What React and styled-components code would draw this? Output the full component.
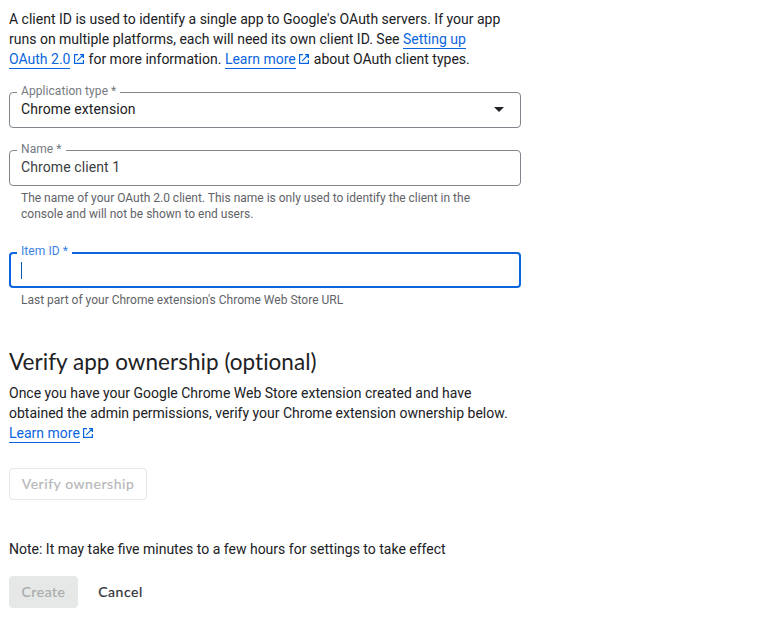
import React from "react";
import styled, { createGlobalStyle } from "styled-components";

const GlobalStyle = createGlobalStyle`
  * { box-sizing: border-box; }
  body {
    margin: 0;
    background: #fff;
    color: #202124;
    font: 400 14px/20px Roboto, sans-serif;
  }
`;

const Page = styled.main`
  display: flex;
  flex-direction: column;
  align-items: flex-start;
  width: 521px;
  padding: 9px 0 0 9px;
`;

const Paragraph = styled.p`
  margin: 0;
  white-space: nowrap;
`;

const Link = styled.a`
  color: #0b66de;
  text-decoration: none;
  padding-bottom: 1px;
  border-bottom: 1px solid #0b66de;
`;

const LaunchSvg = styled.svg`
  width: 12px;
  height: 12px;
  margin: 0 0 0 2.6px;
  vertical-align: -1px;
  fill: none;
  stroke: #0b66de;
  stroke-width: 1.2;
`;

const Field = styled.div`
  position: relative;
  display: flex;
  align-items: center;
  justify-content: space-between;
  width: 512px;
  height: 36px;
  margin-top: ${(p) => p.$gap}px;
  padding: 0 ${(p) => (p.$focused ? 10 : 11)}px ${(p) => (p.$focused ? 0 : 2)}px;
  border: ${(p) => (p.$focused ? "2px solid #0b66de" : "1px solid #80868b")};
  border-radius: 4px;
  color: ${(p) => p.$color || "#202124"};
  letter-spacing: 0.1px;
`;

const FieldLabel = styled.label`
  position: absolute;
  top: ${(p) => (p.$focused ? -11 : -10)}px;
  left: ${(p) => (p.$focused ? 6 : 7)}px;
  padding: 0 4px;
  background: #fff;
  color: ${(p) => (p.$focused ? "#3c82e4" : "#757a7f")};
  font-size: 12px;
  line-height: 17px;
  letter-spacing: 0.07px;
  white-space: nowrap;
`;

const Caret = styled.span`
  width: 1px;
  height: 17px;
  margin-top: 1px;
  background: #0b57b8;
`;

const ArrowSvg = styled.svg`
  width: 10px;
  height: 5px;
  margin-right: 5px;
  margin-top: 1px;
  fill: #202124;
`;

const Hint = styled.p`
  margin: 4px 0 0 12px;
  color: #5f6368;
  font-size: 12px;
  line-height: 16px;
  white-space: nowrap;
`;

const Heading = styled.h2`
  margin: 40px 0 7px;
  font: 400 22.5px/28px Lato, sans-serif;
  letter-spacing: ${(p) => p.$tracking}px;
  white-space: nowrap;
`;

const Note = styled(Paragraph)`
  margin-top: 39px;
`;

const Actions = styled.div`
  display: flex;
  gap: 8px;
  margin-top: ${(p) => p.$gap}px;
`;

const Button = styled.button`
  width: ${(p) => p.$width}px;
  height: 32px;
  padding: 0;
  border: 1px solid ${(p) => (p.$kind === "outlined" ? "#e6e7e7" : "transparent")};
  border-radius: 4px;
  background: ${(p) => (p.$kind === "filled" ? "#e6e8e7" : "#fff")};
  background-clip: border-box;
  color: ${(p) => (p.$kind === "text" ? "#303238" : p.$kind === "filled" ? "#a9abac" : "#b7b8b9")};
  font: 400 14px/20px Lato, sans-serif;
  -webkit-text-stroke: 0.2px currentColor;
  letter-spacing: 0.55px;
  white-space: nowrap;
`;

function LaunchIcon() {
  return (
    <LaunchSvg viewBox="0 0 12 12" aria-hidden="true">
      <path d="M5 1.6H1.6V10.4H10.4V7M7 1.6H10.4V5M10.2 1.8L4.2 7.8" />
    </LaunchSvg>
  );
}

export default function App() {
  return (
    <>
      <GlobalStyle />
      <Page>
        <Paragraph>
          A client ID is used to identify a single app to Google's OAuth servers. If your app<br />
          runs on multiple platforms, each will need its own client ID. See <Link>Setting up</Link><br />
          <Link>OAuth 2.0</Link><LaunchIcon /> for more information. <Link>Learn more</Link><LaunchIcon /> about OAuth client types.
        </Paragraph>
        <Field $gap={23}>
          <FieldLabel>Application type *</FieldLabel>
          <span>Chrome extension</span>
          <ArrowSvg viewBox="0 0 10 5" aria-hidden="true"><path d="M0 0H10L5 5Z" /></ArrowSvg>
        </Field>
        <Field $gap={22} $color="#3c4043">
          <FieldLabel>Name *</FieldLabel>
          <span>Chrome client 1</span>
        </Field>
        <Hint>
          The name of your OAuth 2.0 client. This name is only used to identify the client in the<br />
          console and will not be shown to end users.
        </Hint>
        <Field $gap={30} $focused>
          <FieldLabel $focused>Item ID *</FieldLabel>
          <Caret />
        </Field>
        <Hint>Last part of your Chrome extension's Chrome Web Store URL</Hint>
        <Heading $tracking={0.03}>Verify app ownership (optional)</Heading>
        <Paragraph>
          Once you have your Google Chrome Web Store extension created and have<br />
          obtained the admin permissions, verify your Chrome extension ownership below.<br />
          <Link>Learn more</Link><LaunchIcon />
        </Paragraph>
        <Actions $gap={25}>
          <Button $kind="outlined" $width={138} disabled>Verify ownership</Button>
        </Actions>
        <Note>Note: It may take five minutes to a few hours for settings to take effect</Note>
        <Actions $gap={17}>
          <Button $kind="filled" $width={69} disabled>Create</Button>
          <Button $kind="text" $width={69}>Cancel</Button>
        </Actions>
      </Page>
    </>
  );
}
